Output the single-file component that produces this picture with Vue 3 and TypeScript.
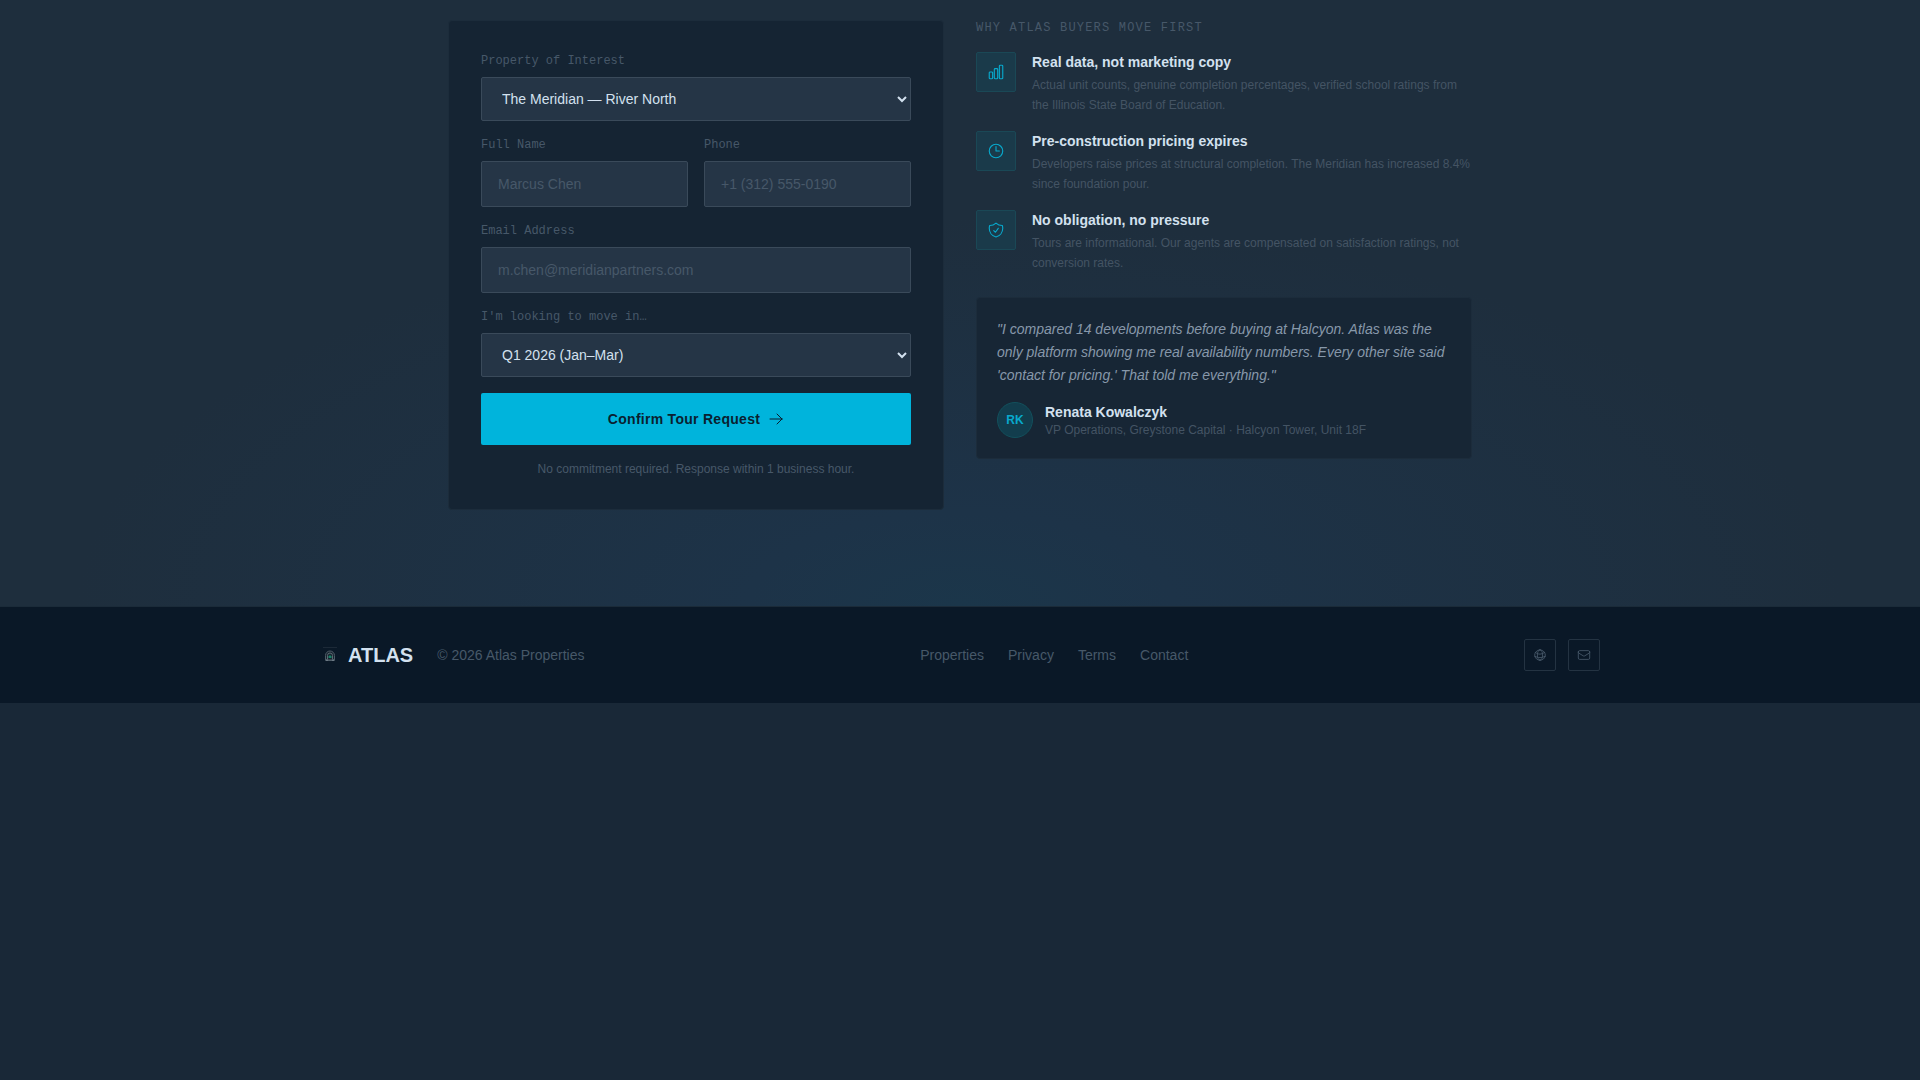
<script setup lang="ts">
import { ref } from 'vue'

interface Reason {
  title: string
  text: string
  icon: string
}

const property = ref('The Meridian — River North')
const timeline = ref('Q1 2026 (Jan–Mar)')
const fullName = ref('')
const phone = ref('')
const email = ref('')

const properties: string[] = ['The Meridian — River North', 'Halcyon Tower']
const timelines: string[] = ['Q1 2026 (Jan–Mar)', 'Q2 2026 (Apr–Jun)']
const links: string[] = ['Properties', 'Privacy', 'Terms', 'Contact']

const reasons: Reason[] = [
  {
    title: 'Real data, not marketing copy',
    text: 'Actual unit counts, genuine completion percentages, verified school ratings from the Illinois State Board of Education.',
    icon: 'M3 13.125C3 12.504 3.504 12 4.125 12h2.25c.621 0 1.125.504 1.125 1.125v6.75C7.5 20.496 6.996 21 6.375 21h-2.25A1.125 1.125 0 0 1 3 19.875v-6.75ZM9.75 8.625c0-.621.504-1.125 1.125-1.125h2.25c.621 0 1.125.504 1.125 1.125v11.25c0 .621-.504 1.125-1.125 1.125h-2.25a1.125 1.125 0 0 1-1.125-1.125V8.625ZM16.5 4.125c0-.621.504-1.125 1.125-1.125h2.25C20.496 3 21 3.504 21 4.125v15.75c0 .621-.504 1.125-1.125 1.125h-2.25a1.125 1.125 0 0 1-1.125-1.125V4.125Z',
  },
  {
    title: 'Pre-construction pricing expires',
    text: 'Developers raise prices at structural completion. The Meridian has increased 8.4% since foundation pour.',
    icon: 'M12 6v6h4.5m4.5 0a9 9 0 1 1-18 0 9 9 0 0 1 18 0Z',
  },
  {
    title: 'No obligation, no pressure',
    text: 'Tours are informational. Our agents are compensated on satisfaction ratings, not conversion rates.',
    icon: 'M9 12.75 11.25 15 15 9.75m-3-7.036A11.959 11.959 0 0 1 3.598 6 11.99 11.99 0 0 0 3 9.749c0 5.592 3.824 10.29 9 11.623 5.176-1.332 9-6.03 9-11.622 0-1.31-.21-2.571-.598-3.751h-.152c-3.196 0-6.1-1.248-8.25-3.285Z',
  },
]
</script>

<template>
  <div class="page">
    <main class="tour">
      <div class="tour-grid">
        <form class="card" @submit.prevent>
          <div class="field">
            <label for="property">Property of Interest</label>
            <select id="property" v-model="property">
              <option v-for="p in properties" :key="p">{{ p }}</option>
            </select>
          </div>
          <div class="pair">
            <div class="field">
              <label for="name">Full Name</label>
              <input id="name" v-model="fullName" type="text" placeholder="Marcus Chen" />
            </div>
            <div class="field">
              <label for="phone">Phone</label>
              <input id="phone" v-model="phone" type="tel" placeholder="+1 (312) 555-0190" />
            </div>
          </div>
          <div class="field">
            <label for="email">Email Address</label>
            <input id="email" v-model="email" type="email" placeholder="m.chen@meridianpartners.com" />
          </div>
          <div class="field">
            <label for="timeline">I'm looking to move in…</label>
            <select id="timeline" v-model="timeline">
              <option v-for="t in timelines" :key="t">{{ t }}</option>
            </select>
          </div>
          <button class="submit" type="submit">
            Confirm Tour Request
            <svg class="icon arrow" viewBox="0 0 24 24" aria-hidden="true">
              <path d="M13.5 4.5 21 12m0 0-7.5 7.5M21 12H3" />
            </svg>
          </button>
          <p class="note">No commitment required. Response within 1 business hour.</p>
        </form>

        <section class="why">
          <h2>Why Atlas buyers move first</h2>
          <ul class="reasons">
            <li v-for="r in reasons" :key="r.title">
              <span class="tile">
                <svg class="icon" viewBox="0 0 24 24" aria-hidden="true"><path :d="r.icon" /></svg>
              </span>
              <div>
                <h3>{{ r.title }}</h3>
                <p>{{ r.text }}</p>
              </div>
            </li>
          </ul>
          <figure class="quote">
            <blockquote>"I compared 14 developments before buying at Halcyon. Atlas was the only platform showing me real availability numbers. Every other site said 'contact for pricing.' That told me everything."</blockquote>
            <figcaption>
              <span class="avatar">RK</span>
              <div>
                <strong>Renata Kowalczyk</strong>
                <span class="role">VP Operations, Greystone Capital · Halcyon Tower, Unit 18F</span>
              </div>
            </figcaption>
          </figure>
        </section>
      </div>
    </main>

    <footer>
      <div class="foot">
        <div class="brand">
          <a class="logo" href="#">
            <svg class="mark" viewBox="0 0 20 20" aria-hidden="true">
              <path d="M3 2.500h14" stroke="#1c2937" />
              <path d="M5.500 15.500v-5a4.500 4.500 0 0 1 9 0v5z" stroke="#4d5a66" fill="#16242f" />
              <path d="M7.500 14v-3.500a2.500 2.500 0 0 1 5 0V14" stroke="#5d6974" />
              <path d="M8.500 11.500 10 10l1.500 1.500V13h-3z" fill="#168266" />
              <path d="M6 15h2M12 15h2" stroke="#8b97a3" />
              <path d="M8 15h4" stroke="#56646f" />
            </svg>
            ATLAS
          </a>
          <span class="copy">© 2026 Atlas Properties</span>
        </div>
        <nav>
          <a v-for="l in links" :key="l" href="#">{{ l }}</a>
        </nav>
        <div class="social">
          <a href="#" aria-label="Website">
            <svg class="icon" viewBox="0 0 24 24" aria-hidden="true">
              <path d="M12 21a9.004 9.004 0 0 0 8.716-6.747M12 21a9.004 9.004 0 0 1-8.716-6.747M12 21c2.485 0 4.500-4.030 4.500-9S14.485 3 12 3m0 18c-2.485 0-4.500-4.030-4.500-9S9.515 3 12 3m0 0a8.997 8.997 0 0 1 7.843 4.582M12 3a8.997 8.997 0 0 0-7.843 4.582m15.686 0A11.953 11.953 0 0 1 12 10.500c-2.998 0-5.740-1.100-7.843-2.918m15.686 0A8.959 8.959 0 0 1 21 12c0 .778-.099 1.533-.284 2.253m0 0A17.919 17.919 0 0 1 12 16.500c-3.162 0-6.133-.815-8.716-2.247m0 0A9.015 9.015 0 0 1 3 12c0-1.605.420-3.113 1.157-4.418" />
            </svg>
          </a>
          <a href="#" aria-label="Email">
            <svg class="icon" viewBox="0 0 24 24" aria-hidden="true">
              <path d="M21.750 6.750v10.500a2.250 2.250 0 0 1-2.250 2.250h-15a2.250 2.250 0 0 1-2.250-2.250V6.750m19.500 0A2.250 2.250 0 0 0 19.500 4.500h-15a2.250 2.250 0 0 0-2.250 2.250m19.500 0v.243a2.250 2.250 0 0 1-1.070 1.916l-7.500 4.615a2.250 2.250 0 0 1-2.360 0L3.320 8.910a2.250 2.250 0 0 1-1.070-1.916V6.750" />
            </svg>
          </a>
        </div>
      </div>
    </footer>
  </div>
</template>

<style>
body {
  margin: 0;
  background: #192837;
}
</style>

<style scoped>
* {
  box-sizing: border-box;
}

.page {
  min-height: 100vh;
  background: #192837;
  color: #d3e1ef;
  font-family: "Liberation Sans", Arial, sans-serif;
  font-size: 14px;
  line-height: 20px;
}

h2, h3, p, ul, figure, blockquote {
  margin: 0;
  padding: 0;
}

a {
  color: inherit;
  text-decoration: none;
}

.icon {
  width: 18px;
  height: 18px;
  fill: none;
  stroke: currentColor;
  stroke-width: 1.5;
  stroke-linecap: round;
  stroke-linejoin: round;
}

.tour {
  padding: 20px 24px 96px;
  background: radial-gradient(ellipse 46% 64% at 50% 100%, #1b364a, #1d3348 24%, #1e2e3d 100%);
}

.tour-grid {
  display: grid;
  grid-template-columns: 1fr 1fr;
  gap: 32px;
  align-items: start;
  max-width: 1024px;
  margin: 0 auto;
}

.card {
  display: flex;
  flex-direction: column;
  gap: 16px;
  padding: 32px;
  border: 1px solid #1c2c3b;
  border-radius: 4px;
  background: #152433;
}

.field {
  display: flex;
  flex-direction: column;
  gap: 8px;
  min-width: 0;
}

.pair {
  display: grid;
  grid-template-columns: 1fr 1fr;
  gap: 16px;
}

label, h2 {
  color: #475869;
  font-family: "Liberation Mono", monospace;
  font-size: 12px;
  font-weight: 400;
  line-height: 16px;
}

select, input {
  width: 100%;
  border: 1px solid #3a4a5a;
  border-radius: 2px;
  background: #253546;
  color: #d3e1ef;
  font: 14px/16px "Liberation Sans", Arial, sans-serif;
}

select {
  height: 44px;
  padding: 12px 0 12px 16px;
}

input {
  height: 46px;
  padding: 14px 16px;
}

input::placeholder {
  color: #475869;
}

.submit {
  display: flex;
  align-items: center;
  justify-content: center;
  gap: 8px;
  height: 52px;
  border: 0;
  border-radius: 2px;
  background: #00b4dc;
  color: #0a1f30;
  font: bold 14px/20px "Liberation Sans", Arial, sans-serif;
  letter-spacing: 0.02em;
}

.arrow {
  width: 16px;
  height: 16px;
}

.note {
  color: #475869;
  font-size: 12px;
  line-height: 16px;
  text-align: center;
}

h2 {
  margin-bottom: 16px;
  letter-spacing: 0.1em;
  text-transform: uppercase;
}

.reasons {
  display: grid;
  gap: 16px;
  margin-bottom: 24px;
  list-style: none;
}

.reasons li {
  display: flex;
  gap: 16px;
}

.reasons h3 {
  margin-bottom: 3px;
  font-size: 14px;
}

.reasons p {
  color: #445464;
  font-size: 12px;
}

.tile {
  display: grid;
  flex: none;
  place-items: center;
  width: 40px;
  height: 40px;
  border: 1px solid #1a4856;
  border-radius: 2px;
  background: #1a3a4a;
  color: #08a9cd;
}

.quote {
  padding: 20px;
  border: 1px solid #1c2c3b;
  border-radius: 4px;
  background: #172635;
}

blockquote {
  margin-bottom: 15px;
  color: #8798aa;
  font-style: italic;
  line-height: 23px;
}

figcaption {
  display: flex;
  align-items: center;
  gap: 12px;
}

.avatar {
  display: grid;
  place-items: center;
  width: 36px;
  height: 36px;
  border: 1px solid #12505c;
  border-radius: 50%;
  background: #123d4d;
  color: #08a9cd;
  font-size: 12px;
  font-weight: 700;
}

strong, .role {
  display: block;
}

.role {
  color: #445464;
  font-size: 12px;
  line-height: 16px;
}

footer {
  padding: 32px 24px;
  border-top: 1px solid #1b2b39;
  background: #0a1827;
}

.foot, .brand, .logo, nav, .social {
  display: flex;
  align-items: center;
}

.foot {
  justify-content: space-between;
  max-width: 1280px;
  margin: 0 auto;
}

.brand, nav {
  gap: 24px;
  color: #475869;
}

.logo {
  gap: 8px;
  color: #d3e1ef;
  font-size: 20px;
  font-weight: 700;
}

.mark {
  width: 20px;
  height: 20px;
  fill: none;
}

.social {
  gap: 12px;
}

.social a {
  display: grid;
  place-items: center;
  width: 32px;
  height: 32px;
  border: 1px solid #243342;
  border-radius: 2px;
  color: #475869;
}

.social .icon {
  width: 14px;
  height: 14px;
}
</style>
